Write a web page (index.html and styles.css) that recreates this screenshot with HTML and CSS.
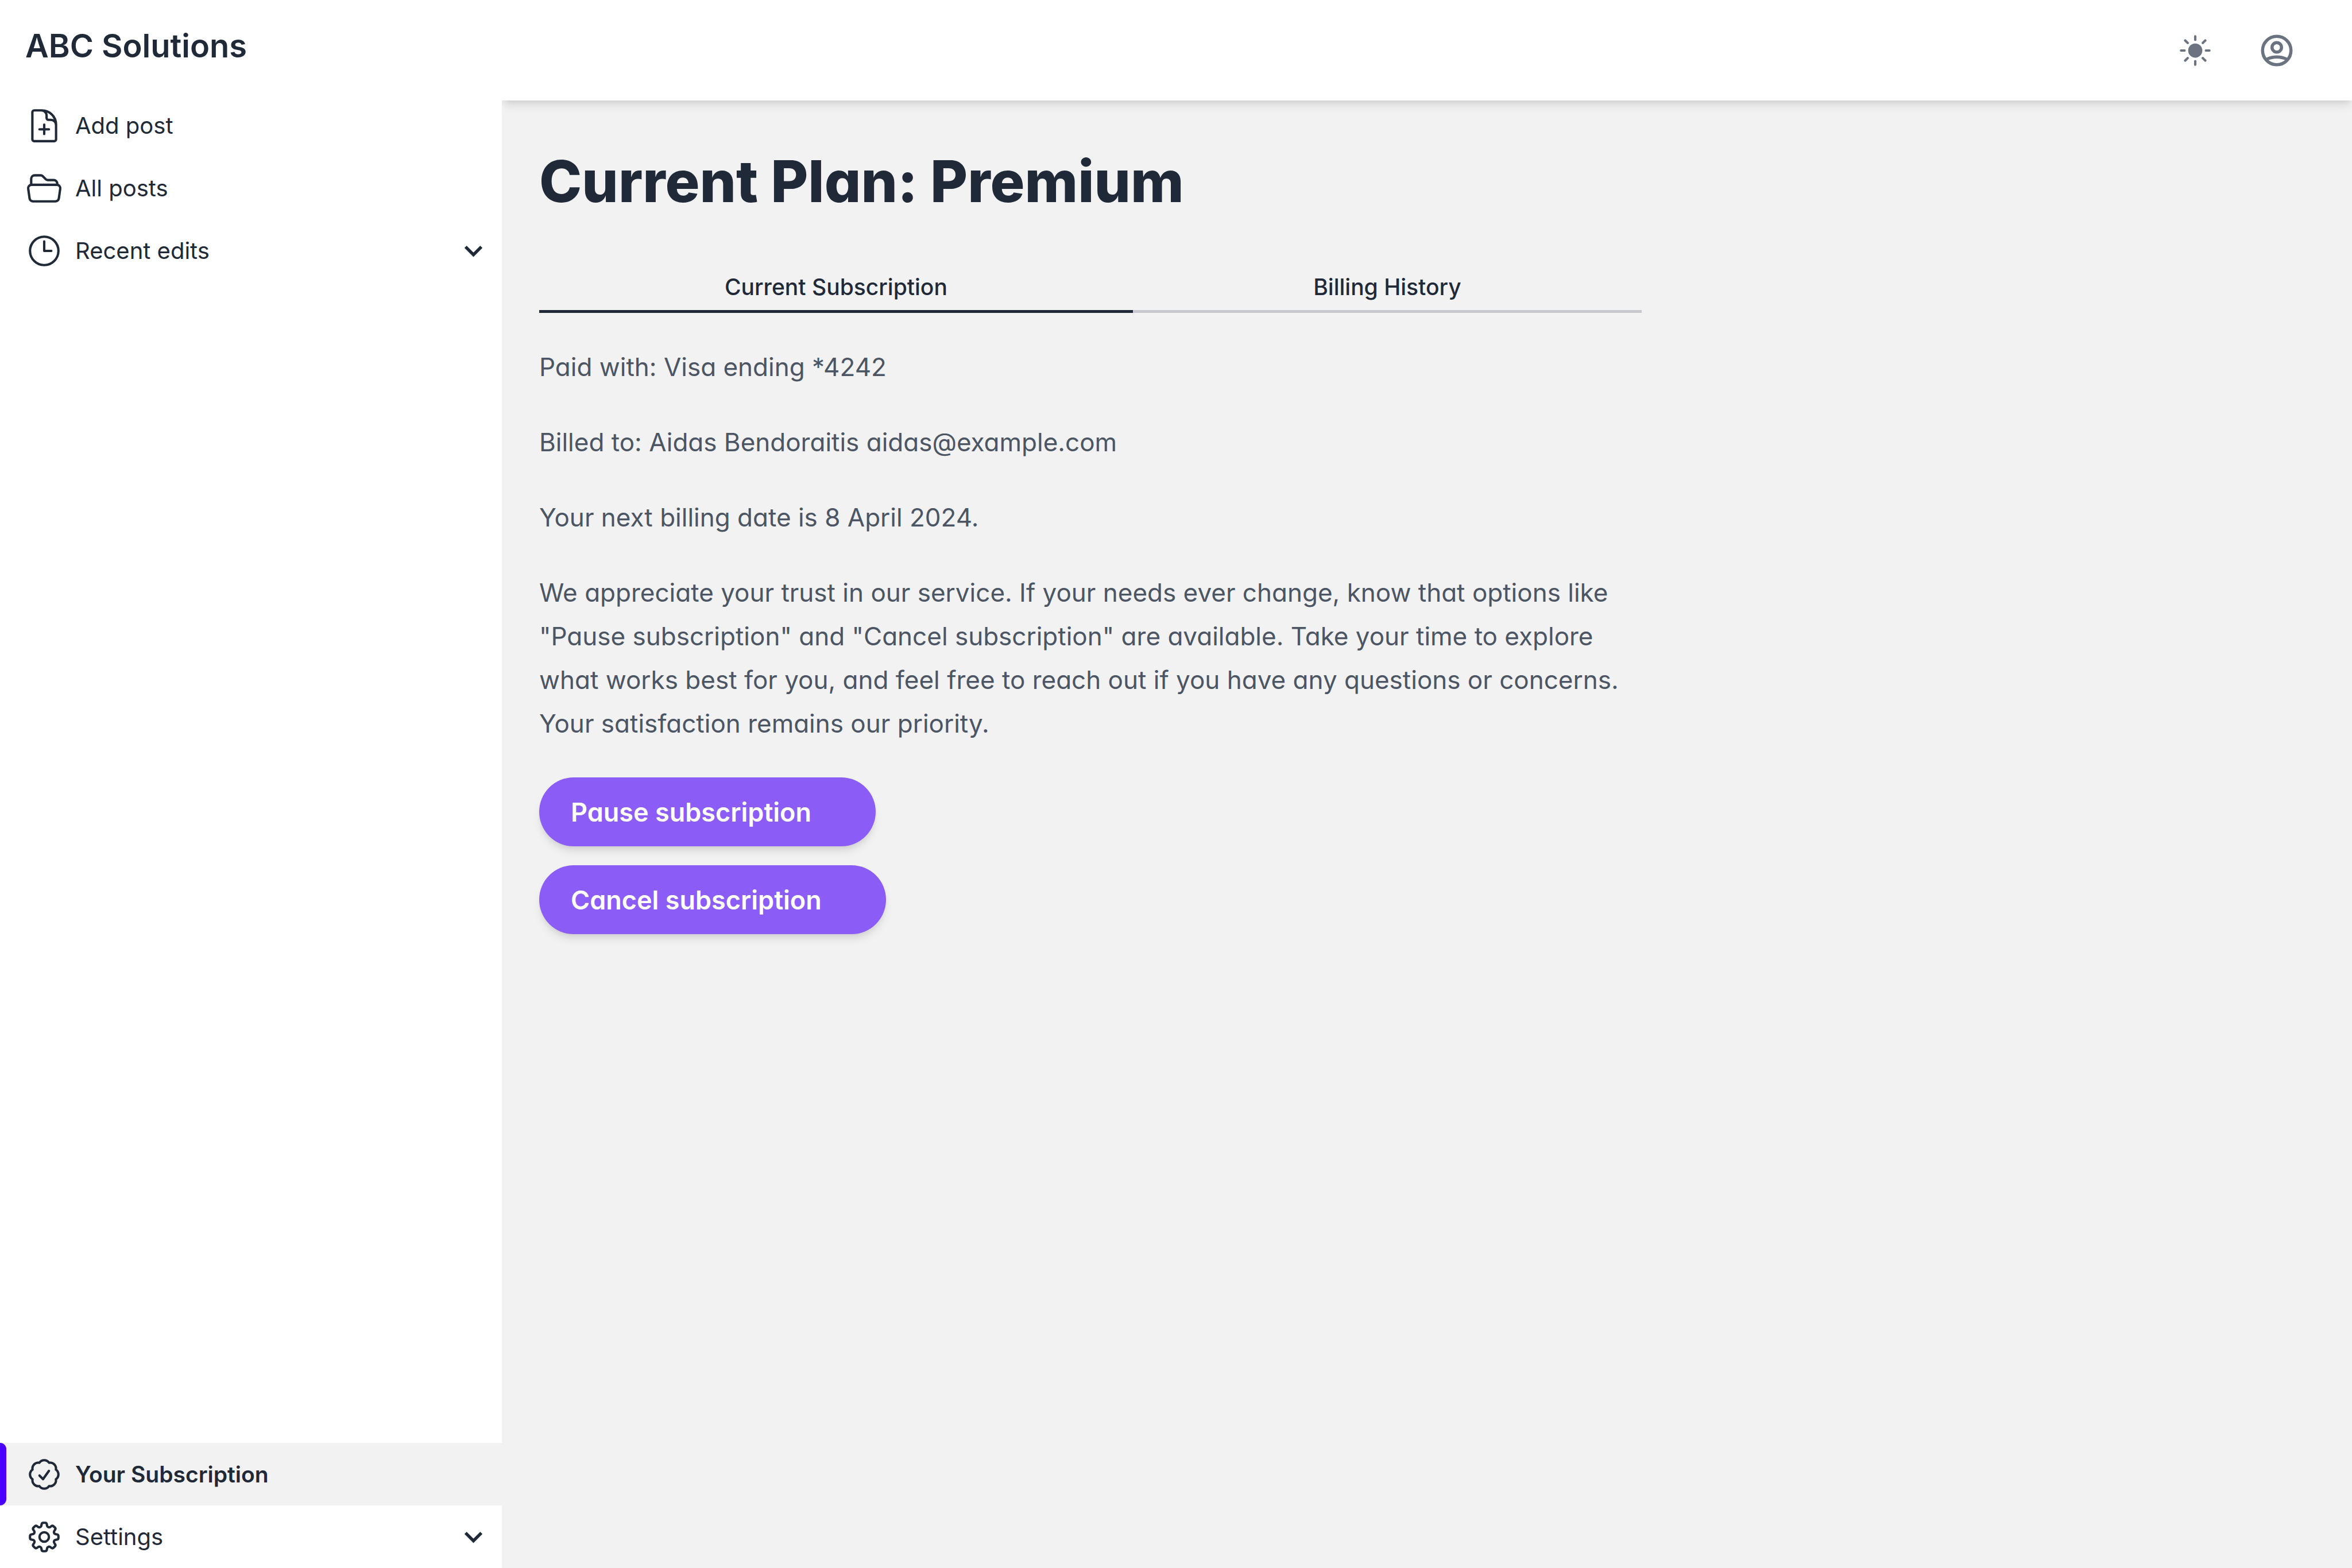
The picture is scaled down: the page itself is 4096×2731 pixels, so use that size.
FILE: index.html
```html
<!DOCTYPE html>
<html lang="en">
<head>
<meta charset="utf-8">
<meta name="viewport" content="width=device-width, initial-scale=1">
<title>ABC Solutions – Your Subscription</title>
<link rel="stylesheet" href="styles.css">
</head>
<body>
<div class="layout">
  <aside class="sidebar">
    <a class="brand" href="#">ABC Solutions</a>
    <nav class="nav" aria-label="Main">
      <a class="nav-item" href="#">
        <svg class="icon" viewBox="0 0 24 24" aria-hidden="true"><path d="M19.5 14.25v-2.625a3.375 3.375 0 0 0-3.375-3.375h-1.5A1.125 1.125 0 0 1 13.5 7.125v-1.5a3.375 3.375 0 0 0-3.375-3.375H8.25m3.75 9v6m3-3H9m1.5-12H5.625c-.621 0-1.125.504-1.125 1.125v17.25c0 .621.504 1.125 1.125 1.125h12.75c.621 0 1.125-.504 1.125-1.125V11.25a9 9 0 0 0-9-9Z"/></svg>
        <span>Add post</span>
      </a>
      <a class="nav-item" href="#">
        <svg class="icon" viewBox="0 0 24 24" aria-hidden="true"><path d="M3.75 9.776c.112-.017.227-.026.344-.026h15.812c.117 0 .232.009.344.026m-16.5 0a2.25 2.25 0 0 0-1.883 2.542l.857 6a2.25 2.25 0 0 0 2.227 1.932H19.05a2.25 2.25 0 0 0 2.227-1.932l.857-6a2.25 2.25 0 0 0-1.883-2.542m-16.5 0V6A2.25 2.25 0 0 1 6 3.75h3.879a1.5 1.5 0 0 1 1.06.44l2.122 2.12a1.5 1.5 0 0 0 1.06.44H18A2.25 2.25 0 0 1 20.25 9v.776"/></svg>
        <span>All posts</span>
      </a>
      <button class="nav-item" type="button" aria-expanded="false">
        <svg class="icon" viewBox="0 0 24 24" aria-hidden="true"><path d="M12 6v6h4.5m4.5 0a9 9 0 1 1-18 0 9 9 0 0 1 18 0Z"/></svg>
        <span>Recent edits</span>
        <svg class="chevron" viewBox="0 0 12 8" aria-hidden="true"><path d="M1 1.4 6 6.4l5-5"/></svg>
      </button>
    </nav>
    <nav class="nav nav-bottom" aria-label="Account">
      <a class="nav-item active" href="#" aria-current="page">
        <svg class="icon" viewBox="0 0 24 24" aria-hidden="true"><path d="M9 12.75 11.25 15 15 9.75M21 12c0 1.268-.63 2.39-1.593 3.068a3.745 3.745 0 0 1-1.043 3.296 3.745 3.745 0 0 1-3.296 1.043A3.745 3.745 0 0 1 12 21c-1.268 0-2.39-.63-3.068-1.593a3.746 3.746 0 0 1-3.296-1.043 3.745 3.745 0 0 1-1.043-3.296A3.745 3.745 0 0 1 3 12c0-1.268.63-2.39 1.593-3.068a3.745 3.745 0 0 1 1.043-3.296 3.746 3.746 0 0 1 3.296-1.043A3.746 3.746 0 0 1 12 3c1.268 0 2.39.63 3.068 1.593a3.746 3.746 0 0 1 3.296 1.043 3.746 3.746 0 0 1 1.043 3.296A3.745 3.745 0 0 1 21 12Z"/></svg>
        <span>Your Subscription</span>
      </a>
      <button class="nav-item" type="button" aria-expanded="false">
        <svg class="icon" viewBox="0 0 24 24" aria-hidden="true"><path d="M10.343 3.94c.09-.542.56-.94 1.11-.94h1.093c.55 0 1.02.398 1.11.94l.149.894c.07.424.384.764.78.93.398.164.855.142 1.205-.108l.737-.527a1.125 1.125 0 0 1 1.45.12l.773.774c.39.389.44 1.002.12 1.45l-.527.737c-.25.35-.272.806-.107 1.204.165.397.505.71.93.78l.893.15c.543.09.94.559.94 1.109v1.094c0 .55-.397 1.02-.94 1.11l-.894.149c-.424.07-.764.383-.929.78-.165.398-.143.854.107 1.204l.527.738c.32.447.269 1.06-.12 1.45l-.774.773a1.125 1.125 0 0 1-1.449.12l-.738-.527c-.35-.25-.806-.272-1.203-.107-.398.165-.71.505-.781.929l-.149.894c-.09.542-.56.94-1.11.94h-1.094c-.55 0-1.019-.398-1.11-.94l-.148-.894c-.071-.424-.384-.764-.781-.93-.398-.164-.854-.142-1.204.108l-.738.527c-.447.32-1.06.269-1.45-.12l-.773-.774a1.125 1.125 0 0 1-.12-1.45l.527-.737c.25-.35.272-.806.108-1.204-.165-.397-.506-.71-.93-.78l-.894-.15c-.542-.09-.94-.56-.94-1.109v-1.094c0-.55.398-1.02.94-1.11l.894-.149c.424-.07.765-.383.93-.78.165-.398.143-.854-.108-1.204l-.526-.738a1.125 1.125 0 0 1 .12-1.45l.773-.773a1.125 1.125 0 0 1 1.45-.12l.737.527c.35.25.807.272 1.204.107.397-.165.71-.505.78-.929l.15-.894Z"/><path d="M15 12a3 3 0 1 1-6 0 3 3 0 0 1 6 0Z"/></svg>
        <span>Settings</span>
        <svg class="chevron" viewBox="0 0 12 8" aria-hidden="true"><path d="M1 1.4 6 6.4l5-5"/></svg>
      </button>
    </nav>
  </aside>
  <div class="page">
    <header class="topbar">
      <button class="icon-button" type="button" aria-label="Toggle theme">
        <svg class="icon" viewBox="0 0 24 24" aria-hidden="true"><circle class="fill" cx="12" cy="12" r="4.5"/><path d="M12 3v2.25m6.364.386-1.591 1.591M21 12h-2.25m-.386 6.364-1.591-1.591M12 18.75V21m-4.773-4.227-1.591 1.591M5.25 12H3m4.227-4.773L5.636 5.636"/></svg>
      </button>
      <button class="icon-button" type="button" aria-label="Account">
        <svg class="icon icon-account" viewBox="0 0 24 24" aria-hidden="true"><circle cx="12" cy="12" r="9"/><circle cx="12" cy="10" r="3"/><path d="M5.6 17.5Q8.6 16.05 12 16.05T18.4 17.5"/></svg>
      </button>
    </header>
    <main class="content">
      <h1>Current Plan: Premium</h1>
      <div class="tabs" role="tablist">
        <button class="tab selected" type="button" role="tab" aria-selected="true">Current Subscription</button>
        <button class="tab" type="button" role="tab" aria-selected="false">Billing History</button>
      </div>
      <div class="prose">
        <p>Paid with: Visa ending *4242</p>
        <p>Billed to: Aidas Bendoraitis aidas@example.com</p>
        <p>Your next billing date is 8 April 2024.</p>
        <p>We appreciate your trust in our service. If your needs ever change, know that options like "Pause subscription" and "Cancel subscription" are available. Take your time to explore what works best for you, and feel free to reach out if you have any questions or concerns. Your satisfaction remains our priority.</p>
      </div>
      <div class="actions">
        <button class="pill" type="button">Pause subscription</button>
        <button class="pill" type="button">Cancel subscription</button>
      </div>
    </main>
  </div>
</div>
</body>
</html>
```
FILE: styles.css
```css
:root {
  --ink: #1f2937;
  --body: #4b5563;
  --muted: #6b7280;
  --surface: #ffffff;
  --ground: #f2f2f2;
  --accent: #4b00ff;
  --violet: #8b5cf6;
  --shadow: 0 11px 16px -3px rgb(0 0 0 / 0.1), 0 5px 11px -5px rgb(0 0 0 / 0.1);
}

* {
  box-sizing: border-box;
}

body {
  margin: 0;
  background: var(--ground);
  color: var(--ink);
  font-family: Inter, "Liberation Sans", sans-serif;
  font-size: 40px;
  font-feature-settings: "cv11";
}

button {
  margin: 0;
  border: 0;
  background: none;
  color: inherit;
  font: inherit;
  font-feature-settings: inherit;
  text-align: left;
  cursor: pointer;
}

a {
  color: inherit;
  text-decoration: none;
}

h1,
p {
  margin: 0;
}

.layout {
  display: grid;
  grid-template-columns: 874px minmax(0, 1fr);
  min-height: 100vh;
}

.sidebar {
  position: relative;
  z-index: 1;
  display: flex;
  flex-direction: column;
  background: var(--surface);
}

.brand {
  padding: 44px 44px 48px;
  font-size: 56px;
  font-weight: 600;
  line-height: 72px;
}

.nav-bottom {
  margin-top: auto;
}

.nav-item {
  display: flex;
  align-items: center;
  gap: 21px;
  width: 100%;
  height: 109px;
  padding: 0 33px 0 44px;
  font-size: 40px;
  line-height: 55px;
}

.nav-item.active {
  position: relative;
  background: var(--ground);
  font-size: 39px;
  font-weight: 600;
}

.nav-item.active::before {
  content: "";
  position: absolute;
  inset: 0 auto 0 0;
  width: 11px;
  border-radius: 0 11px 11px 0;
  background: var(--accent);
}

.icon {
  display: block;
  flex: none;
  width: 66px;
  height: 66px;
  fill: none;
  stroke: currentColor;
  stroke-width: 1.5;
  stroke-linecap: round;
  stroke-linejoin: round;
}

.icon .fill {
  fill: currentColor;
  stroke: none;
}

.icon-account {
  stroke-width: 2;
  stroke-linecap: butt;
}

.chevron {
  width: 33px;
  height: 22px;
  margin-left: auto;
  fill: none;
  stroke: currentColor;
  stroke-width: 2;
}

.topbar {
  display: flex;
  align-items: center;
  justify-content: flex-end;
  gap: 76px;
  height: 175px;
  padding: 0 98px;
  background: var(--surface);
  box-shadow: var(--shadow);
  color: var(--muted);
}

.icon-button {
  padding: 0;
}

.content {
  max-width: 2050px;
  padding: 86px 65px;
}

h1 {
  font-size: 100px;
  font-weight: 800;
  line-height: 110px;
}

.tabs {
  display: grid;
  grid-template-columns: 7fr 6fr;
  margin-top: 101px;
}

.tab {
  padding: 0 0 13px;
  border-bottom: 5px solid #c8c9ce;
  font-size: 39px;
  font-weight: 500;
  line-height: 55px;
  text-align: center;
}

.tab.selected {
  border-color: var(--ink);
}

.prose {
  display: flex;
  flex-direction: column;
  gap: 55px;
  margin-top: 56px;
  color: var(--body);
  font-size: 44px;
  line-height: 76px;
}

.actions {
  display: flex;
  flex-direction: column;
  align-items: flex-start;
  gap: 33px;
  margin-top: 56px;
}

.pill {
  height: 120px;
  padding: 0 112px 0 55px;
  border-radius: 60px;
  background: var(--violet);
  box-shadow: var(--shadow);
  color: #ffffff;
  font-size: 45px;
  font-weight: 600;
}
```
